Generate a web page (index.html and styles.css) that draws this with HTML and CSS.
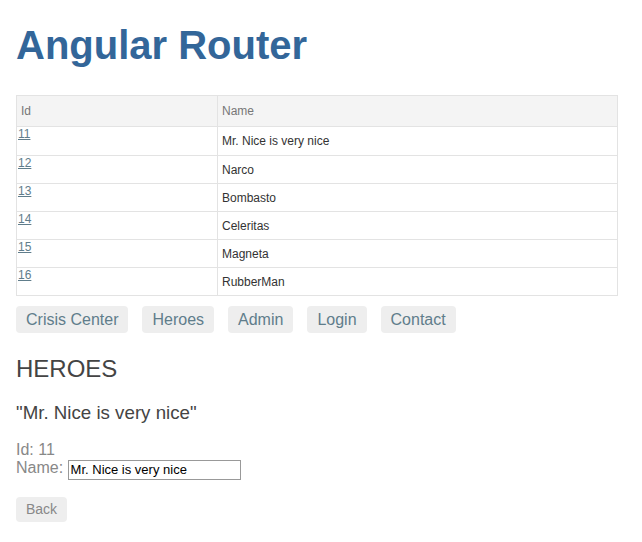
FILE: index.html
```html
<!DOCTYPE html>
<html>
<head>
<meta charset="utf-8">
<link rel="stylesheet" href="styles.css">
</head>
<body>
<div class="page">
  <h1 class="title">Angular Router</h1>
  <table class="heroes-table">
    <thead>
      <tr><th class="col-id">Id</th><th class="col-name">Name</th></tr>
    </thead>
    <tbody>
      <tr class="row-first"><td class="cell-id"><a href="#">11</a></td><td class="cell-name">Mr. Nice is very nice</td></tr>
      <tr><td class="cell-id"><a href="#">12</a></td><td class="cell-name">Narco</td></tr>
      <tr><td class="cell-id"><a href="#">13</a></td><td class="cell-name">Bombasto</td></tr>
      <tr><td class="cell-id"><a href="#">14</a></td><td class="cell-name">Celeritas</td></tr>
      <tr><td class="cell-id"><a href="#">15</a></td><td class="cell-name">Magneta</td></tr>
      <tr><td class="cell-id"><a href="#">16</a></td><td class="cell-name">RubberMan</td></tr>
    </tbody>
  </table>
  <nav class="nav">
    <a class="nav-link" href="#">Crisis Center</a>
    <a class="nav-link" href="#">Heroes</a>
    <a class="nav-link" href="#">Admin</a>
    <a class="nav-link" href="#">Login</a>
    <a class="nav-link" href="#">Contact</a>
  </nav>
  <h2 class="section-title">HEROES</h2>
  <h3 class="hero-title">"Mr. Nice is very nice"</h3>
  <div class="field">Id: 11</div>
  <div class="field"><label class="field-label">Name: </label><input class="name-input" type="text" value="Mr. Nice is very nice"></div>
  <button class="back-btn">Back</button>
</div>
</body>
</html>
```
FILE: styles.css
```css
html, body {
  margin: 0;
  padding: 0;
  background: #fff;
}
.page {
  padding: 0 16px;
  font-family: "Liberation Sans", Arial, sans-serif;
  color: #888;
}
.title {
  color: #369;
  font-family: "Liberation Sans", Arial, sans-serif;
  font-size: 40px;
  font-weight: bold;
  line-height: 45px;
  margin: 23px 0 27px;
}
.heroes-table {
  border-collapse: collapse;
  width: 602px;
  font-size: 12px;
}
.heroes-table th,
.heroes-table td {
  border: 1px solid #e3e3e3;
  text-align: left;
}
.heroes-table th {
  background: #f4f4f4;
  color: #777;
  font-weight: normal;
  height: 30px;
  padding: 0 4px;
}
.col-id {
  width: 192px;
}
.cell-id {
  vertical-align: top;
  padding: 0 1px;
  height: 27px;
}
.row-first .cell-id {
  height: 28px;
}
.cell-id a {
  color: #607d8b;
  text-decoration: underline;
  line-height: 14px;
}
.cell-name {
  color: #333;
  padding: 0 4px;
  vertical-align: middle;
}
.nav {
  display: flex;
  gap: 14px;
  margin-top: 10px;
}
.nav-link {
  display: block;
  padding: 5px 10px;
  background: #eee;
  border-radius: 4px;
  color: #607d8b;
  text-decoration: none;
  font-size: 16px;
  line-height: 17px;
}
.section-title {
  color: #444;
  font-size: 24px;
  font-weight: lighter;
  line-height: 27px;
  margin: 22px 0 20px;
}
.hero-title {
  color: #444;
  font-size: 18.72px;
  font-weight: lighter;
  line-height: 22px;
  margin: 0 0 17px;
}
.field {
  font-size: 16px;
  line-height: 18px;
  color: #888;
}
.field-label {
  color: #888;
}
.name-input {
  font-family: "Liberation Sans", Arial, sans-serif;
  font-size: 13px;
  color: #000;
  width: 167px;
  height: 16px;
  padding: 1px 2px;
  border: 1px solid #999;
  margin: 0;
  vertical-align: -1px;
}
.back-btn {
  margin-top: 17px;
  font-family: "Liberation Sans", Arial, sans-serif;
  font-size: 14px;
  line-height: 15px;
  color: #888;
  background: #eee;
  border: none;
  padding: 5px 10px;
  border-radius: 4px;
}
```
